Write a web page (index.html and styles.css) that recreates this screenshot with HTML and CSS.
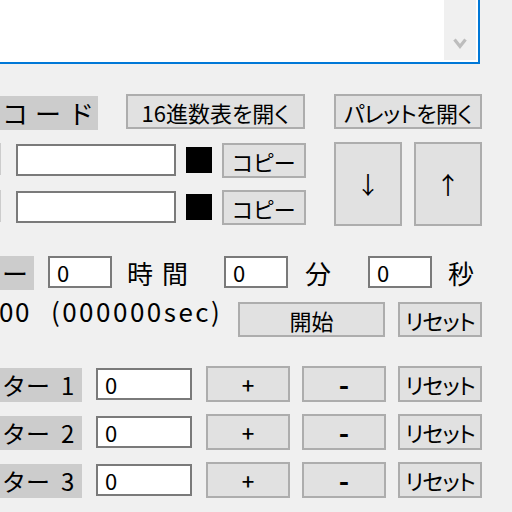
FILE: index.html
```html
<!DOCTYPE html>
<html lang="ja">
<head>
<meta charset="utf-8">
<title>ツール</title>
<link rel="stylesheet" href="styles.css">
</head>
<body>
<div class="list">
  <div class="vscroll">
    <svg class="chev" width="14" height="12" viewBox="0 0 14 12"><polyline points="1.5,1.5 7,8.5 12.5,1.5" fill="none" stroke="#bdbdbd" stroke-width="3.2"/></svg>
  </div>
</div>

<div class="row row-a">
  <div class="label lbl-color">コード</div>
  <button class="btn btn-hex">16進数表を開く</button>
  <button class="btn btn-palette">パレットを開く</button>
</div>

<div class="color-block">
  <div class="color-rows">
    <div class="color-row">
      <div class="label lbl-stub"></div>
      <input class="field field-color" type="text" value="" readonly>
      <div class="swatch"></div>
      <button class="btn btn-copy">コピー</button>
    </div>
    <div class="color-row">
      <div class="label lbl-stub"></div>
      <input class="field field-color" type="text" value="" readonly>
      <div class="swatch"></div>
      <button class="btn btn-copy">コピー</button>
    </div>
  </div>
  <button class="btn btn-arrow btn-down">↓</button>
  <button class="btn btn-arrow btn-up">↑</button>
</div>

<div class="row timer-row">
  <div class="label lbl-timer">ー</div>
  <input class="field field-time" type="text" value="0" readonly>
  <span class="unit unit-h">時間</span>
  <input class="field field-time" type="text" value="0" readonly>
  <span class="unit unit-m">分</span>
  <input class="field field-time" type="text" value="0" readonly>
  <span class="unit unit-s">秒</span>
</div>

<div class="row status-row">
  <div class="time-text"><span class="tt-a">00</span><span class="tt-b">(000000sec)</span></div>
  <button class="btn btn-start">開始</button>
  <button class="btn btn-reset">リセット</button>
</div>

<div class="counters">
  <div class="row counter-row">
    <div class="label lbl-counter">ター<span class="num">1</span></div>
    <input class="field field-count" type="text" value="0" readonly>
    <button class="btn btn-plus">+</button>
    <button class="btn btn-minus">-</button>
    <button class="btn btn-reset btn-creset">リセット</button>
  </div>
  <div class="row counter-row">
    <div class="label lbl-counter">ター<span class="num">2</span></div>
    <input class="field field-count" type="text" value="0" readonly>
    <button class="btn btn-plus">+</button>
    <button class="btn btn-minus">-</button>
    <button class="btn btn-reset btn-creset">リセット</button>
  </div>
  <div class="row counter-row">
    <div class="label lbl-counter">ター<span class="num">3</span></div>
    <input class="field field-count" type="text" value="0" readonly>
    <button class="btn btn-plus">+</button>
    <button class="btn btn-minus">-</button>
    <button class="btn btn-reset btn-creset">リセット</button>
  </div>
</div>
</body>
</html>
```

FILE: styles.css
```css
html, body {
  margin: 0;
  padding: 0;
}
body {
  width: 512px;
  height: 512px;
  overflow: hidden;
  background: #f0f0f0;
  color: #000;
  font-family: "Noto Sans CJK JP", "Noto Sans", sans-serif;
}

/* top list box */
.list {
  display: flex;
  justify-content: flex-end;
  width: 478px;
  height: 62px;
  background: #fff;
  border-right: 2px solid #0078d7;
  border-bottom: 2px solid #0078d7;
}
.vscroll {
  box-sizing: border-box;
  width: 32px;
  height: 60px;
  margin-right: 2px;
  background: #f0f0f0;
  display: flex;
  align-items: flex-end;
  justify-content: center;
  padding-bottom: 10px;
}
.chev { display: block; }

.row {
  display: flex;
  align-items: flex-start;
}

.label {
  box-sizing: border-box;
  background: #cccccc;
  display: flex;
  justify-content: flex-start;
  align-items: center;
  white-space: nowrap;
  font-size: 26px;
  line-height: 1;
  flex: none;
}

.btn {
  box-sizing: border-box;
  flex: none;
  background: #e1e1e1;
  border: 2px solid #adadad;
  font-family: inherit;
  font-feature-settings: "palt";
  font-size: 22px;
  line-height: 1;
  padding: 0;
  margin: 0;
  color: #000;
  display: flex;
  align-items: center;
  justify-content: center;
  white-space: nowrap;
}

.field {
  box-sizing: border-box;
  flex: none;
  background: #fff;
  border: 2px solid #7a7a7a;
  margin: 0;
  padding: 0 0 0 7px;
  font-family: inherit;
  font-size: 22px;
  line-height: 1;
  color: #000;
  outline: none;
}

/* colour section */
.row-a {
  margin-top: 30px;
  height: 35px;
}
.lbl-color {
  width: 98px;
  height: 34px;
  margin-top: 2px;
  padding-left: 2px;
  letter-spacing: 7px;
}
.btn-hex {
  margin-left: 28px;
  width: 179px;
  height: 35px;
}
.btn-palette {
  margin-left: 29px;
  width: 148px;
  height: 35px;
  letter-spacing: -0.5px;
}

.color-block {
  display: flex;
  align-items: flex-start;
  margin-top: 13px;
}
.color-rows {
  display: flex;
  flex-direction: column;
  gap: 12px;
  padding-top: 1px;
}
.color-row {
  display: flex;
  align-items: flex-start;
  height: 35px;
}
.lbl-stub {
  width: 1px;
  height: 32px;
}
.field-color {
  margin-left: 15px;
  margin-top: 1px;
  width: 160px;
  height: 32px;
}
.swatch {
  flex: none;
  margin-left: 10px;
  margin-top: 4px;
  width: 26px;
  height: 26px;
  background: #000;
}
.btn-copy {
  margin-left: 10px;
  width: 84px;
  height: 35px;
}
.btn-arrow {
  width: 68px;
  height: 84px;
  font-size: 24px;
}
.btn-down { margin-left: 28px; }
.btn-up { margin-left: 12px; }

/* timer */
.timer-row {
  margin-top: 30px;
  height: 34px;
}
.lbl-timer {
  width: 34px;
  height: 34px;
  padding-left: 2px;
}
.field-time {
  width: 64px;
  height: 32px;
}
.timer-row .lbl-timer + .field-time { margin-left: 14px; }
.unit {
  box-sizing: border-box;
  flex: none;
  height: 34px;
  display: flex;
  align-items: center;
  font-size: 26px;
  line-height: 1;
  white-space: nowrap;
}
.unit-h {
  width: 112px;
  padding-left: 15px;
  letter-spacing: 9px;
}
.unit-m {
  width: 80px;
  padding-left: 17px;
}
.unit-s {
  width: 80px;
  padding-left: 16px;
}

.status-row {
  margin-top: 12px;
  height: 35px;
}
.time-text {
  box-sizing: border-box;
  flex: none;
  width: 226px;
  height: 26px;
  margin-top: -4px;
  display: flex;
  justify-content: flex-start;
  align-items: center;
  white-space: nowrap;
  font-size: 26px;
  line-height: 1;
  letter-spacing: 1.5px;
}
.tt-a { margin-left: -1px; }
.tt-b {
  margin-left: 20px;
  letter-spacing: 2.5px;
}
.btn-start {
  margin-left: 12px;
  width: 147px;
  height: 35px;
}
.btn-reset {
  margin-left: 13px;
  width: 84px;
  height: 35px;
  letter-spacing: -1px;
}

/* counters */
.counters {
  display: flex;
  flex-direction: column;
  gap: 12px;
  margin-top: 29px;
}
.counter-row { height: 36px; }
.lbl-counter {
  width: 82px;
  height: 34px;
  margin-top: 2px;
  padding-left: 2px;
  font-size: 24px;
}
.lbl-counter .num { margin-left: 11px; }
.field-count {
  margin-left: 14px;
  margin-top: 2px;
  width: 96px;
  height: 32px;
}
.btn-plus,
.btn-minus {
  width: 84px;
  height: 36px;
  font-size: 22px;
  font-weight: 500;
}
.btn-minus {
  font-size: 28px;
  font-weight: 700;
}
.btn-plus { margin-left: 14px; }
.btn-minus { margin-left: 12px; }
.btn-creset {
  margin-left: 12px;
  height: 36px;
}
```
